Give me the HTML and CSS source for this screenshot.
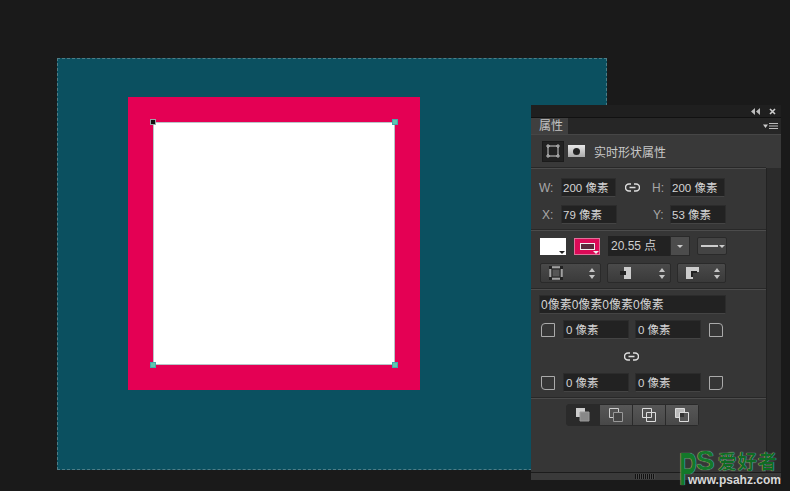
FILE: index.html
```html
<!DOCTYPE html>
<html lang="zh-CN">
<head>
  <meta charset="UTF-8" />
  <title>属性</title>
  <link rel="stylesheet" href="styles.css">
</head>
<body>

  <!-- document on the canvas -->
  <div class="doc">
    <div class="stroke">
      <div class="shape">
        <i class="handle tl"></i>
        <i class="handle tr"></i>
        <i class="handle bl"></i>
        <i class="handle br"></i>
      </div>
    </div>
  </div>

  <!-- properties panel -->
  <div class="panel">
    <div class="titlebar">
      <svg width="9" height="7" viewBox="0 0 9 7"><path d="M4 0v7L0 3.5zM9 0v7L5 3.5z" fill="#bbb"/></svg>
      <svg class="close" width="7" height="7" viewBox="0 0 7 7"><path d="M1 1l5 5M6 1L1 6" stroke="#ccc" stroke-width="1.6"/></svg>
    </div>
    <div class="tabs">
      <div class="tab">属性</div>
      <svg width="15" height="7" viewBox="0 0 15 7"><path d="M0 1.5h5L2.500 5z" fill="#ccc"/><path d="M6 .5h9M6 3h9M6 5.500h9" stroke="#bbb"/></svg>
    </div>
    <div class="head">
      <div class="mode active">
        <svg width="14" height="14" viewBox="0 0 14 14"><rect x="2" y="2" width="10" height="10" fill="none" stroke="#ccc"/><path d="M1 1h2v2H1zM11 1h2v2h-2zM1 11h2v2H1zM11 11h2v2h-2z" fill="#333" stroke="#ddd" stroke-width=".8"/></svg>
      </div>
      <div class="mask"><span></span></div>
      <div class="head-title">实时形状属性</div>
    </div>

    <div class="body">
      <div class="main">
        <div class="sec sec-size">
          <div class="row">
            <label class="lab">W:</label>
            <div class="field w55">200 像素</div>
            <svg class="link" width="15" height="9" viewBox="0 0 15 9"><path d="M6 1H4a3.500 3.500 0 0 0 0 7h2M9 1h2a3.500 3.500 0 0 1 0 7H9M4.500 4.500h6" fill="none" stroke="#ddd" stroke-width="1.500"/></svg>
            <label class="lab lab-r">H:</label>
            <div class="field w55">200 像素</div>
          </div>
          <div class="row row-y">
            <label class="lab lab-x">X:</label>
            <div class="field w56">79 像素</div>
            <label class="lab lab-y">Y:</label>
            <div class="field w56">53 像素</div>
          </div>
        </div>

        <div class="sec sec-stroke">
          <div class="row">
            <div class="swatch white"><b></b></div>
            <div class="swatch pink"><span></span><b></b></div>
            <div class="combo">
              <div class="combo-val">20.55 点</div>
              <div class="combo-btn"><em class="caret"></em></div>
            </div>
            <div class="line-sel"><span></span><em class="caret"></em></div>
          </div>
          <div class="row row-sel">
            <div class="sel s61">
              <svg width="14" height="14" viewBox="0 0 14 14"><rect x="1" y="1" width="12" height="12" fill="#777" stroke="#ccc"/><rect x="3" y="3" width="8" height="8" fill="#555" stroke="#222"/><path d="M0 0h3v3H0zM11 0h3v3h-3zM0 11h3v3H0zM11 11h3v3h-3z" fill="#222"/></svg>
              <span class="updown"></span>
            </div>
            <div class="sel s64">
              <svg width="14" height="14" viewBox="0 0 14 14"><path d="M5 1h7v12H5z" fill="#ccc"/><path d="M1 5h6v4H1z" fill="#222"/></svg>
              <span class="updown"></span>
            </div>
            <div class="sel s49">
              <svg width="14" height="14" viewBox="0 0 14 14"><path d="M0 1h13v5H7v7H0z" fill="#ccc"/><path d="M5 5h6v2H7v4H5z" fill="#222"/></svg>
              <span class="updown"></span>
            </div>
          </div>
        </div>

        <div class="sec sec-corner">
          <div class="field full">0像素0像素0像素0像素</div>
          <div class="row row-c1">
            <svg class="corner" width="14" height="14" viewBox="0 0 14 14"><path d="M.5 13.500V4A3.500 3.500 0 0 1 4 .5h9.500v13z" fill="none" stroke="#aaa"/></svg>
            <div class="field w66">0 像素</div>
            <div class="field w66">0 像素</div>
            <svg class="corner" width="14" height="14" viewBox="0 0 14 14"><path d="M13.500 13.500V4A3.500 3.500 0 0 0 10 .5H.5v13z" fill="none" stroke="#aaa"/></svg>
          </div>
          <div class="link-row">
            <svg width="15" height="9" viewBox="0 0 15 9"><path d="M6 1H4a3.500 3.500 0 0 0 0 7h2M9 1h2a3.500 3.500 0 0 1 0 7H9M4.500 4.500h6" fill="none" stroke="#ddd" stroke-width="1.500"/></svg>
          </div>
          <div class="row">
            <svg class="corner" width="14" height="14" viewBox="0 0 14 14"><path d="M.5 .5V10A3.500 3.500 0 0 0 4 13.500h9.500V.5z" fill="none" stroke="#aaa"/></svg>
            <div class="field w66">0 像素</div>
            <div class="field w66">0 像素</div>
            <svg class="corner" width="14" height="14" viewBox="0 0 14 14"><path d="M13.500 .5V10A3.500 3.500 0 0 1 10 13.500H.5V.5z" fill="none" stroke="#aaa"/></svg>
          </div>
        </div>

        <div class="sec sec-ops">
          <div class="btn-group">
            <div class="op on">
              <svg width="14" height="14" viewBox="0 0 14 14"><path d="M0 0h9v9H0z" fill="#ccc"/><path d="M4 4h9v9H4z" fill="#888" stroke="#999"/></svg>
            </div>
            <div class="op">
              <svg width="14" height="14" viewBox="0 0 14 14"><path d="M.5 .5h9v9h-9z" fill="none" stroke="#ccc"/><path d="M4.500 4.500h9v9h-9z" fill="#444" stroke="#999"/></svg>
            </div>
            <div class="op">
              <svg width="14" height="14" viewBox="0 0 14 14"><path d="M.5 .5h9v9h-9z" fill="none" stroke="#ddd"/><path d="M4.500 4.500h9v9h-9z" fill="none" stroke="#ddd"/></svg>
            </div>
            <div class="op">
              <svg width="14" height="14" viewBox="0 0 14 14"><path d="M.5 .5h9v9h-9z" fill="#bbb" stroke="#ddd"/><path d="M4.500 4.500h9v9h-9z" fill="#555" stroke="#ddd"/><path d="M5 5h4v4H5z" fill="#333"/></svg>
            </div>
          </div>
        </div>
      </div>
      <div class="scroll"></div>
    </div>

    <div class="foot"><span class="grip"></span></div>
  </div>

  <!-- site watermark -->
  <div class="mark">
    <div class="mark-p">P</div>
    <div class="mark-rest">
      <div class="mark-top"><span class="mark-s">S</span><span class="mark-cn">爱好者</span></div>
      <div class="mark-url">www.psahz.com</div>
    </div>
  </div>

</body>
</html>
```

FILE: styles.css
```css
* { box-sizing: border-box; }
html, body { height: 100%; }
body { margin: 0; width: 790px; height: 491px; overflow: hidden; position: relative; background: #1a1a1a; color: #ccc; font-family: "Liberation Sans", "Noto Sans CJK SC", sans-serif; font-size: 12px; }

/* canvas */
.doc { position: absolute; left: 57px; top: 58px; width: 550px; height: 412px; background: #0b5060; border: 1px dashed #4e7d87; padding: 38px 0 0 70px; }
.stroke { width: 292px; height: 293px; background: #e40054; padding: 25px 0 0 25px; }
.shape { position: relative; width: 242px; height: 243px; background: #fff; border: 1px solid #b9c4c8; }
.handle { position: absolute; width: 6px; height: 6px; background: #5fc7ae; border: 1px solid #4aa; }
.tl { left: -4px; top: -4px; background: #111; border-color: #9aa5a7; }
.tr { right: -4px; top: -4px; }
.bl { left: -4px; bottom: -4px; }
.br { right: -4px; bottom: -4px; }

/* panel */
.panel { position: absolute; left: 531px; top: 105px; width: 250px; height: 375px; background: #363636; display: flex; flex-direction: column; }
.titlebar { height: 12px; background: #1f1f1f; display: flex; align-items: center; justify-content: flex-end; gap: 9px; padding-right: 5px; }
.tabs { height: 17px; background: #262626; border-top: 1px solid #111; display: flex; align-items: flex-end; justify-content: space-between; padding-right: 3px; }
.tabs svg { margin-bottom: 4px; }
.tab { width: 37px; height: 16px; background: #3f3f3f; color: #c4c4c4; line-height: 16px; padding-left: 8px; }
.head { height: 34px; flex: none; display: flex; align-items: center; padding: 0 0 1px 11px; background: #393939; border-top: 1px solid #464646; }
.mode { width: 22px; height: 21px; display: flex; align-items: center; justify-content: center; }
.mode.active { background: #222; border: 1px solid #1b1b1b; }
.mask { width: 17px; height: 12px; margin-left: 4px; background: linear-gradient(#e8e8e8, #aaa); display: flex; align-items: center; justify-content: center; }
.mask span { width: 7px; height: 7px; border-radius: 50%; background: #222; }
.head-title { margin-left: 9px; color: #c8c8c8; font-size: 12px; }

.body { flex: 1; display: flex; min-height: 0; }
.main { width: 235px; display: flex; flex-direction: column; }
.scroll { width: 15px; background: #2b2b2b; border-left: 1px solid #222; }
.sec { border-top: 1px solid #4c4c4c; box-shadow: 0 -1px 0 #282828; }
.sec-size { height: 62px; padding: 9px 0 0 8px; }
.sec-stroke { height: 59px; padding: 5px 0 0 9px; }
.sec-corner { height: 109px; padding: 5px 0 0 8px; }
.sec-ops { flex: 1; padding-top: 5px; }

.row { display: flex; align-items: center; }
.lab { color: #a8a8a8; width: 22px; flex: none; }
.lab-r { width: 18px; margin-left: 12px; }
.lab-x { padding-left: 3px; }
.lab-y { width: 17px; margin-left: 36px; }
.row-y { margin-top: 8px; }
.link { margin-left: 9px; }

.field { height: 19px; line-height: 18px; background: #222; border: 1px solid #2c2c2c; border-bottom-color: #444; color: #d4d4d4; padding-left: 1px; font-size: 11.5px; white-space: nowrap; overflow: hidden; }
.w55 { width: 55px; }
.w56 { width: 56px; }
.w66 { width: 66px; padding-left: 2px; }
.full { width: 187px; font-size: 12px; }

.swatch { position: relative; width: 26px; height: 17px; margin-top: 1px; margin-right: 8px; }
.swatch b { position: absolute; right: 1px; bottom: 1px; border: 3px solid transparent; border-top: 3px solid #222; border-bottom: 0; }
.white { background: #fff; }
.pink { background: #dc0a57; border: 1px solid #e0709a; display: flex; align-items: center; justify-content: center; }
.pink span { width: 15px; height: 7px; background: #5a2a3c; border: 1px solid #eee; }
.pink b { border-top-color: #eee; right: 0; bottom: 0; }
.combo { display: flex; height: 20px; width: 82px; margin-right: 7px; }
.combo-val { flex: 1; background: #222; color: #d0d0d0; line-height: 20px; padding-left: 3px; font-size: 12px; }
.combo-btn { width: 20px; background: #4c4c4c; border: 1px solid #2a2a2a; display: flex; align-items: center; justify-content: center; }
.caret { display: block; border: 3px solid transparent; border-top: 3px solid #ccc; border-bottom: 0; }
.line-sel { width: 30px; height: 18px; background: #444; border: 1px solid #2a2a2a; border-radius: 2px; display: flex; align-items: center; gap: 1px; padding-left: 3px; }
.line-sel span { width: 17px; height: 2px; background: #ccc; }

.row-sel { margin-top: 7px; gap: 6px; }
.sel { height: 20px; background: linear-gradient(#4a4a4a, #3a3a3a); border: 1px solid #2a2a2a; border-radius: 2px; display: flex; align-items: center; justify-content: space-between; padding: 0 4px 0 8px; }
.s61 { width: 61px; }
.s64 { width: 64px; padding-left: 11px; }
.s49 { width: 49px; }
.updown { width: 7px; height: 11px; position: relative; }
.updown::before, .updown::after { content: ""; position: absolute; left: 0; border: 3.500px solid transparent; }
.updown::before { top: 0; border-top: 0; border-bottom: 4px solid #c4c4c4; }
.updown::after { bottom: 0; border-bottom: 0; border-top: 4px solid #c4c4c4; }

.row-c1 { margin-top: 6px; }
.corner { flex: none; margin-left: 2px; }
.corner:last-child { margin-left: 8px; }
.corner + .field { margin-left: 8px; }
.field + .field { margin-left: 6px; }
.link-row { height: 34px; display: flex; align-items: center; justify-content: center; width: 185px; }

.btn-group { display: flex; width: 133px; height: 22px; margin-left: 35px; background: #222; border-radius: 3px; border: 1px solid #2a2a2a; }
.op { flex: 1; display: flex; align-items: center; justify-content: center; background: linear-gradient(#575757, #484848); border-left: 1px solid #2a2a2a; }
.op.on { background: #2a2a2a; border-left: 0; }

.foot { height: 8px; flex: none; background: #3a3a3a; border-top: 1px solid #1c1c1c; display: flex; justify-content: center; align-items: center; padding-right: 22px; }
.grip { width: 20px; height: 5px; background: repeating-linear-gradient(90deg, #111 0 1px, #4a4a4a 1px 2px); }

/* watermark */
.mark { position: absolute; left: 679px; top: 449px; width: 103px; display: flex; }
.mark-p { flex: none; width: 31px; margin-right: -14px; font: bold 46px/40px "Liberation Sans", sans-serif; color: #14782a; text-shadow: 0 0 1px #e6f5e6; transform: scaleX(.58); transform-origin: left top; }
.mark-rest { flex: 1; }
.mark-top { display: flex; align-items: center; height: 24px; }
.mark-s { font: bold 28px/24px "Liberation Sans", sans-serif; color: #14782a; text-shadow: 0 0 1px #e6f5e6; }
.mark-cn { margin-left: 3px; font: bold 19px/24px "Noto Sans CJK SC", sans-serif; color: #0f6b24; letter-spacing: 1px; text-shadow: 0 0 1px #e6f5e6; white-space: nowrap; }
.mark-url { margin: 0 0 0 -8px; font: bold 12px/15px "Liberation Sans", sans-serif; color: #d8d8d8; text-shadow: 0 0 2px #222; white-space: nowrap; }
```
